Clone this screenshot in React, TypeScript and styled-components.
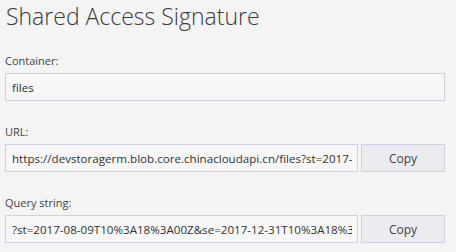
import * as React from "react";
import styled, {createGlobalStyle} from "styled-components";

const GlobalStyle = createGlobalStyle`
  html, body {
    margin: 0;
    padding: 0;
    background: #f4f4f4;
  }
  body {
    font-family: "Open Sans", "Noto Sans", sans-serif;
    color: #333333;
  }
`;

const Page = styled.div`
  padding: 0 11px 0 5px;
  width: 456px;
  height: 252px;
  box-sizing: border-box;
  overflow: hidden;
`;

const Title = styled.h1`
  margin: 0 0 0 1px;
  font-weight: 300;
  font-size: 23px;
  line-height: 32px;
  color: #3a3a3a;
`;

const Fields = styled.div`
  display: flex;
  flex-direction: column;
  gap: 23px;
  margin-top: 21px;
`;

const Field = styled.div`
  display: flex;
  flex-direction: column;
  gap: 4px;
`;

const Label = styled.label`
  font-size: 11px;
  line-height: 16px;
  color: #444444;
`;

const Row = styled.div`
  display: flex;
  gap: 3px;
  height: 28px;
`;

const Input = styled.input`
  flex: 1;
  min-width: 0;
  box-sizing: border-box;
  height: 28px;
  margin: 0;
  padding: 0 5px 0 6px;
  border: 1px solid #cfcfe0;
  background: #f7f7f7;
  font-family: "Open Sans", "Noto Sans", sans-serif;
  font-size: 11.6px;
  color: #333333;
  outline: none;
`;

const Button = styled.button`
  width: 84px;
  flex: none;
  box-sizing: border-box;
  height: 28px;
  margin: 0;
  border: 1px solid #cfcfe0;
  background: #ebebf0;
  font-family: "Open Sans", "Noto Sans", sans-serif;
  font-size: 12px;
  color: #444444;
  cursor: pointer;
`;

const fields = [
  {label: "Container:", value: "files", copy: false},
  {label: "URL:", value: "https://devstoragerm.blob.core.chinacloudapi.cn/files?st=2017-08-09T10%3A18%3A00Z&se=2017-12-31T10%3A18%3A00Z&sp=rl&sv=2017-04-17&sr=c&sig=abc", copy: true},
  {label: "Query string:", value: "?st=2017-08-09T10%3A18%3A00Z&se=2017-12-31T10%3A18%3A00Z&sp=rl&sv=2017-04-17&sr=c&sig=abc", copy: true},
];

const App = () => (
  <Page>
    <GlobalStyle />
    <Title>Shared Access Signature</Title>
    <Fields>
      {fields.map((f) => (
        <Field key={f.label}>
          <Label>{f.label}</Label>
          <Row>
            <Input readOnly value={f.value} />
            {f.copy && <Button>Copy</Button>}
          </Row>
        </Field>
      ))}
    </Fields>
  </Page>
);

export default App;
